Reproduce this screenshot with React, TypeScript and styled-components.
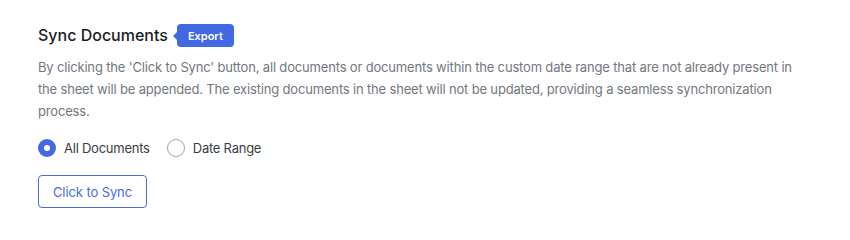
import React, { useState } from "react";
import styled, { createGlobalStyle } from "styled-components";

const Global = createGlobalStyle`
  html, body { margin: 0; padding: 0; background: #ffffff; }
  body { font-family: Inter, "Noto Sans", sans-serif; -webkit-font-smoothing: antialiased; }
  * { box-sizing: border-box; }
`;

const Section = styled.section`
  padding: 24px 38px;
  display: flex;
  flex-direction: column;
  align-items: flex-start;
`;

const Header = styled.div`
  display: flex;
  align-items: center;
  height: 23px;
`;

const Title = styled.h2`
  margin: 0;
  font-size: 16px;
  font-weight: 500;
  color: #1c1c1e;
  line-height: 23px;
`;

const Badge = styled.span`
  position: relative;
  margin-left: 9px;
  height: 23px;
  padding: 0 11px;
  display: inline-flex;
  align-items: center;
  background: #4269e2;
  color: #ffffff;
  border-radius: 4px;
  font-size: 11px;
  font-weight: 600;
  &::before {
    content: "";
    position: absolute;
    left: -4px;
    top: 50%;
    transform: translateY(-50%);
    border-top: 4px solid transparent;
    border-bottom: 4px solid transparent;
    border-right: 4px solid #4269e2;
  }
`;

const Description = styled.p`
  margin: 9px 0 0;
  font-size: 13px;
  letter-spacing: -0.17px;
  line-height: 22px;
  color: #72777f;
  max-width: 762px;
`;

const RadioGroup = styled.div`
  display: flex;
  align-items: center;
  gap: 17px;
  margin-top: 16px;
`;

const RadioLabel = styled.label`
  display: inline-flex;
  align-items: center;
  gap: 8px;
  font-size: 13px;
  letter-spacing: -0.24px;
  color: #3a3d42;
  cursor: pointer;
  height: 20px;
`;

const RadioCircle = styled.span<{ $checked: boolean }>`
  width: 18px;
  height: 18px;
  border-radius: 50%;
  border: ${(p) => (p.$checked ? "6px solid #4269e2" : "1px solid #a3a3a3")};
  background: #ffffff;
  flex-shrink: 0;
`;

const HiddenInput = styled.input`
  display: none;
`;

const SyncButton = styled.button`
  margin-top: 17px;
  height: 33px;
  width: 109px;
  border: 1px solid #4a6be0;
  border-radius: 4px;
  background: #ffffff;
  color: #4a6be0;
  font-family: inherit;
  font-size: 13px;
  letter-spacing: -0.1px;
  cursor: pointer;
`;

export default function App() {
  const [mode, setMode] = useState<"all" | "range">("all");
  const options: { key: "all" | "range"; label: string }[] = [
    { key: "all", label: "All Documents" },
    { key: "range", label: "Date Range" },
  ];
  return (
    <>
      <Global />
      <Section>
        <Header>
          <Title>Sync Documents</Title>
          <Badge>Export</Badge>
        </Header>
        <Description>
          By clicking the 'Click to Sync' button, all documents or documents within the custom date range that are not
          already present in the sheet will be appended. The existing documents in the sheet will not be updated,
          providing a seamless synchronization process.
        </Description>
        <RadioGroup>
          {options.map((o) => (
            <RadioLabel key={o.key}>
              <HiddenInput type="radio" name="mode" checked={mode === o.key} onChange={() => setMode(o.key)} />
              <RadioCircle $checked={mode === o.key} />
              {o.label}
            </RadioLabel>
          ))}
        </RadioGroup>
        <SyncButton>Click to Sync</SyncButton>
      </Section>
    </>
  );
}
